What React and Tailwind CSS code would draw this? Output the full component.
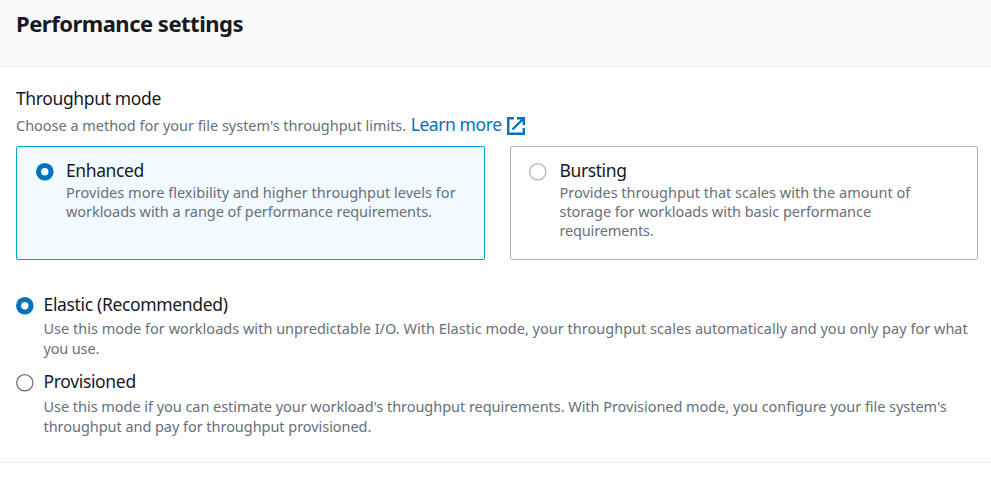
import React from "react";

function Radio({ checked, muted }) {
  return (
    <svg className="block h-[18px] w-[18px] shrink-0" viewBox="0 0 18 18">
      {checked ? (
        <>
          <circle cx="8.8" cy="8.8" r="8.8" fill="#0073bb" />
          <circle cx="8.8" cy="8.8" r="3.7" fill="#fff" />
        </>
      ) : (
        <circle cx="8.8" cy="8.8" r="8.1" fill="#fff" stroke={muted ? "#aab7b8" : "#687078"} strokeWidth="1.3" />
      )}
    </svg>
  );
}

function Lines({ lines, className }) {
  return (
    <p className={`whitespace-nowrap text-[14.5px] text-[#687078] ${className}`}>
      {lines.map(([line, tracking]) => (
        <span key={line} className={`block ${tracking}`}>
          {line}
        </span>
      ))}
    </p>
  );
}

function Tile({ title, lines, checked }) {
  return (
    <div
      className={`flex h-[114px] items-start gap-[12.5px] rounded-[2px] border pl-[18.5px] pt-[10px] ${
        checked ? "border-[#00a1c9] bg-[#f1faff]" : "border-[#aab7b8] bg-white"
      }`}
    >
      <div className="pt-[6px]">
        <Radio checked={checked} muted />
      </div>
      <div>
        <h3 className="h-[26px] text-[17.5px] leading-[27px] tracking-[-0.4px]">{title}</h3>
        <Lines lines={lines} className="leading-[19px]" />
      </div>
    </div>
  );
}

function Option({ title, lines, checked }) {
  return (
    <div className="flex h-[78px] items-start gap-[9.5px]">
      <div className={checked ? "pt-[7px]" : "pt-[6px]"}>
        <Radio checked={checked} />
      </div>
      <div>
        <h3 className={`h-[28px] text-[17.5px] tracking-[-0.34px] ${checked ? "leading-[28px]" : "leading-[26px]"}`}>
          {title}
        </h3>
        <Lines lines={lines} className="leading-[20px]" />
      </div>
    </div>
  );
}

export default function App() {
  return (
    <main className="h-[478px] w-[991px] overflow-hidden bg-white font-['Noto_Sans',sans-serif] text-[#16191f]">
      <header className="h-[67px] border-b border-[#eaeded] bg-[#fafafa] px-4 pt-[8px]">
        <h1 className="text-[22px] leading-[30px] font-bold tracking-[-0.5px]">Performance settings</h1>
      </header>
      <section className="h-[396px] border-b border-[#eaeded] pl-4 pr-[13px] pt-[18px]">
        <h2 className="h-[27px] text-[17.5px] leading-[26px] tracking-[-0.37px]">Throughput mode</h2>
        <div className="flex h-[27px] items-center whitespace-nowrap">
          <span className="text-[14.5px] tracking-[-0.025px] text-[#687078]">
            Choose a method for your file system's throughput limits.
          </span>
          <a className="ml-[4.5px] flex items-center gap-[4.5px] text-[17.5px] tracking-[-0.42px] text-[#0073bb]">
            <span className="pb-[2px]">Learn more</span>
            <svg className="h-[20px] w-[20px]" viewBox="0 0 20 20" fill="none" stroke="#0073bb" strokeWidth="2.4">
              <path d="M8 2.2H2.2v15.6h15.6V12M11 2.2h6.8V9M17.5 2.5 6.5 13.5" />
            </svg>
          </a>
        </div>
        <div className="mt-[7px] grid grid-cols-2 gap-[25px]">
          <Tile
            checked
            title="Enhanced"
            lines={[
              ["Provides more flexibility and higher throughput levels for", "tracking-[0.02px]"],
              ["workloads with a range of performance requirements.", "tracking-[-0.06px]"],
            ]}
          />
          <Tile
            title="Bursting"
            lines={[
              ["Provides throughput that scales with the amount of", "tracking-[0px]"],
              ["storage for workloads with basic performance", "tracking-[-0.045px]"],
              ["requirements.", "tracking-[-0.16px]"],
            ]}
          />
        </div>
        <div className="mt-[30px]">
          <Option
            checked
            title="Elastic (Recommended)"
            lines={[
              [
                "Use this mode for workloads with unpredictable I/O. With Elastic mode, your throughput scales automatically and you only pay for what",
                "tracking-[0.015px]",
              ],
              ["you use.", "tracking-[-0.15px]"],
            ]}
          />
          <Option
            title="Provisioned"
            lines={[
              [
                "Use this mode if you can estimate your workload's throughput requirements. With Provisioned mode, you configure your file system's",
                "tracking-[-0.04px]",
              ],
              ["throughput and pay for throughput provisioned.", "tracking-[-0.045px]"],
            ]}
          />
        </div>
      </section>
    </main>
  );
}
